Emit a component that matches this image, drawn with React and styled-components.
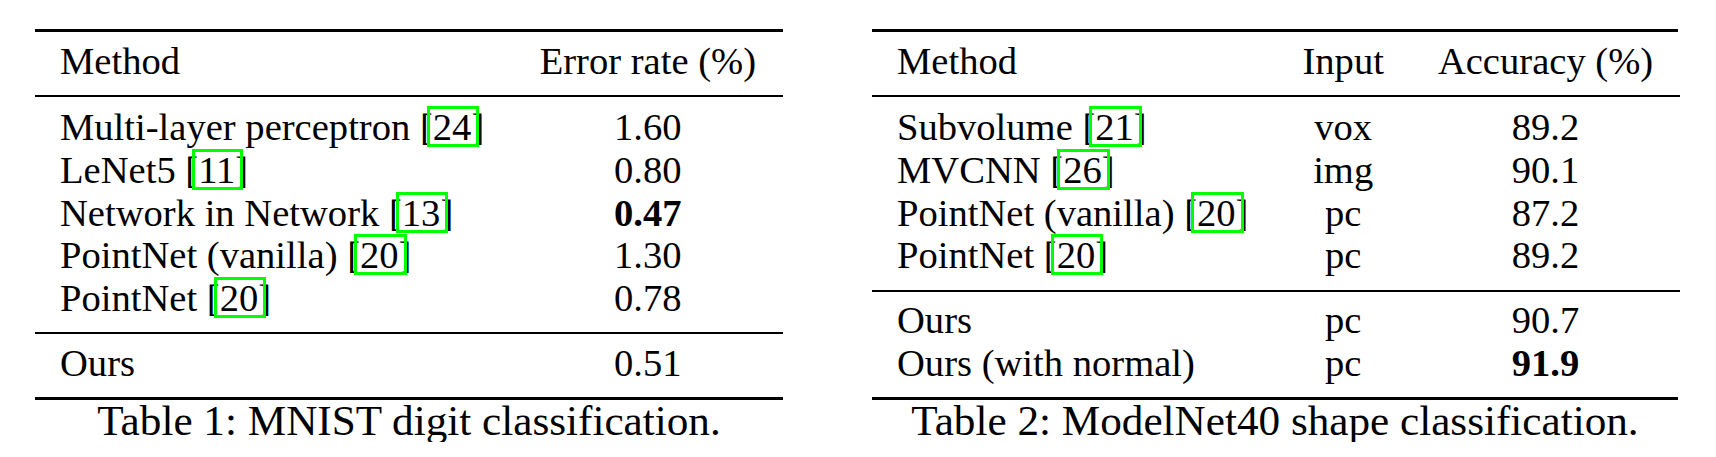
import React from 'react';
import styled, { createGlobalStyle } from 'styled-components';

const Global = createGlobalStyle`
  body {
    margin: 0;
    background: #fff;
  }
`;

const Page = styled.div`
  display: flex;
  align-items: flex-start;
  gap: 89px;
  padding: 29px 0 0 35px;
  font-family: "Liberation Serif", "Times New Roman", serif;
  color: #000;
`;

const Figure = styled.div`
  width: ${(props) => props.width}px;
  display: flex;
  flex-direction: column;
`;

const Table = styled.div`
  display: grid;
  grid-template-columns: ${(props) => props.cols};
  border-top: 3px solid #000;
  border-bottom: 3px solid #000;
  padding: 7.6px 0 12.5px;
  font-size: 38.6px;
  line-height: 42.7px;
`;

const Rule = styled.div`
  grid-column: 1 / -1;
  height: 2px;
  background: #000;
  margin: ${(props) => props.above}px 0 ${(props) => props.below}px;
`;

const Cell = styled.div`
  padding: 0 27px;
  white-space: nowrap;
  text-align: ${(props) => (props.center ? 'center' : 'left')};
  font-weight: ${(props) => (props.bold ? 700 : 400)};
  &.method {
    padding-left: 25px;
  }
`;

const Box = styled.span`
  position: relative;
  &::before {
    content: '';
    position: absolute;
    top: 0;
    bottom: 1px;
    left: -6px;
    right: -8px;
    border: 3px solid #00ff00;
  }
`;

const Caption = styled.div`
  text-align: center;
  font-size: 43.2px;
  line-height: 42.5px;
  white-space: nowrap;
`;

const Cite = ({ n }) => (
  <>
    [<Box>{n}</Box>]
  </>
);

const Row = ({ cells }) =>
  cells.map((c, i) => (
    <Cell key={i} className={i === 0 ? 'method' : ''} center={i > 0} bold={c.bold}>
      {c.text}
      {c.cite && <> <Cite n={c.cite} /></>}
    </Cell>
  ));

const mnist = [
  [{ text: 'Multi-layer perceptron', cite: '24' }, { text: '1.60' }],
  [{ text: 'LeNet5', cite: '11' }, { text: '0.80' }],
  [{ text: 'Network in Network', cite: '13' }, { text: '0.47', bold: true }],
  [{ text: 'PointNet (vanilla)', cite: '20' }, { text: '1.30' }],
  [{ text: 'PointNet', cite: '20' }, { text: '0.78' }],
];

const modelnet = [
  [{ text: 'Subvolume', cite: '21' }, { text: 'vox' }, { text: '89.2' }],
  [{ text: 'MVCNN', cite: '26' }, { text: 'img' }, { text: '90.1' }],
  [{ text: 'PointNet (vanilla)', cite: '20' }, { text: 'pc' }, { text: '87.2' }],
  [{ text: 'PointNet', cite: '20' }, { text: 'pc' }, { text: '89.2' }],
];

const ours = [
  [{ text: 'Ours' }, { text: 'pc' }, { text: '90.7' }],
  [{ text: 'Ours (with normal)' }, { text: 'pc' }, { text: '91.9', bold: true }],
];

export default function App() {
  return (
    <>
      <Global />
      <Page>
        <Figure width={748}>
          <Table cols="1fr auto">
            <Row cells={[{ text: 'Method' }, { text: 'Error rate (%)' }]} />
            <Rule above={12.5} below={9.5} />
            {mnist.map((r, i) => (
              <Row key={i} cells={r} />
            ))}
            <Rule above={12} below={7.8} />
            <Row cells={[{ text: 'Ours' }, { text: '0.51' }]} />
          </Table>
          <Caption>Table 1: MNIST digit classification.</Caption>
        </Figure>
        <Figure width={806}>
          <Table cols="1fr auto auto">
            <Row cells={[{ text: 'Method' }, { text: 'Input' }, { text: 'Accuracy (%)' }]} />
            <Rule above={12.5} below={9.5} />
            {modelnet.map((r, i) => (
              <Row key={i} cells={r} />
            ))}
            <Rule above={12.7} below={7.1} />
            {ours.map((r, i) => (
              <Row key={i} cells={r} />
            ))}
          </Table>
          <Caption>Table 2: ModelNet40 shape classification.</Caption>
        </Figure>
      </Page>
    </>
  );
}
